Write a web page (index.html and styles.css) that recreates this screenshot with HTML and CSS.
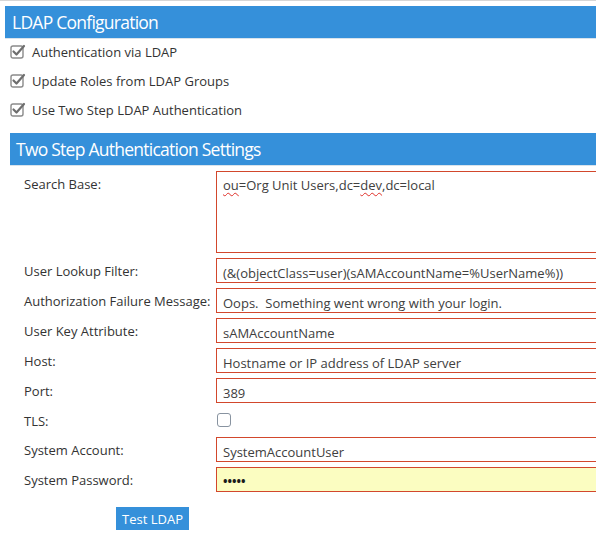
FILE: index.html
```html
<!DOCTYPE html>
<html>
<head>
<meta charset="utf-8">
<link rel="stylesheet" href="styles.css">
</head>
<body>
<div class="page">
  <section class="config">
    <h2 class="bar bar-main">LDAP Configuration</h2>
    <div class="checks">
      <label class="check-row"><span class="cb"><svg width="16" height="16" viewBox="0 0 16 16"><rect x="1" y="3" width="12" height="12" rx="2" fill="#fff" stroke="#8a8a8a" stroke-width="1.4"/><path d="M3.5 8.5 L6.5 11.5 L14 3" fill="none" stroke="#6e6e6e" stroke-width="2.2" stroke-linecap="round" stroke-linejoin="round"/></svg></span>Authentication via LDAP</label>
      <label class="check-row"><span class="cb"><svg width="16" height="16" viewBox="0 0 16 16"><rect x="1" y="3" width="12" height="12" rx="2" fill="#fff" stroke="#8a8a8a" stroke-width="1.4"/><path d="M3.5 8.5 L6.5 11.5 L14 3" fill="none" stroke="#6e6e6e" stroke-width="2.2" stroke-linecap="round" stroke-linejoin="round"/></svg></span>Update Roles from LDAP Groups</label>
      <label class="check-row"><span class="cb"><svg width="16" height="16" viewBox="0 0 16 16"><rect x="1" y="3" width="12" height="12" rx="2" fill="#fff" stroke="#8a8a8a" stroke-width="1.4"/><path d="M3.5 8.5 L6.5 11.5 L14 3" fill="none" stroke="#6e6e6e" stroke-width="2.2" stroke-linecap="round" stroke-linejoin="round"/></svg></span>Use Two Step LDAP Authentication</label>
    </div>
  </section>
  <section class="settings">
    <h2 class="bar bar-sub">Two Step Authentication Settings</h2>
    <div class="form">
      <div class="lbl">Search Base:</div>
      <div class="field area"><span class="sp">ou</span>=Org Unit Users,dc=<span class="sp">dev</span>,dc=local</div>

      <div class="lbl">User Lookup Filter:</div>
      <div class="field">(&amp;(objectClass=user)(sAMAccountName=%UserName%))</div>

      <div class="lbl">Authorization Failure Message:</div>
      <div class="field">Oops.&nbsp; Something went wrong with your login.</div>

      <div class="lbl">User Key Attribute:</div>
      <div class="field">sAMAccountName</div>

      <div class="lbl">Host:</div>
      <div class="field">Hostname or IP address of LDAP server</div>

      <div class="lbl">Port:</div>
      <div class="field">389</div>

      <div class="lbl">TLS:</div>
      <div class="tls-cell"><span class="tls-box"></span></div>

      <div class="lbl">System Account:</div>
      <div class="field">SystemAccountUser</div>

      <div class="lbl">System Password:</div>
      <div class="field pw">•••••</div>
    </div>
    <div class="actions">
      <button class="btn">Test LDAP</button>
    </div>
  </section>
</div>
</body>
</html>
```
FILE: styles.css
```css
html, body {
  margin: 0;
  padding: 0;
  background: #fff;
  overflow: hidden;
}
body {
  font-family: "Open Sans", "Noto Sans", sans-serif;
  font-size: 13px;
  color: #333;
  border-top: 1px solid #d6d6d6;
  width: 596px;
  height: 555px;
}
.page {
  padding-top: 5px;
}
.bar {
  margin: 0;
  background: #3590da;
  color: #fff;
  font-weight: normal;
  height: 32px;
  line-height: 32px;
  border-bottom: 1px solid #d8e3ec;
  white-space: nowrap;
  font-size: 17.5px;
  letter-spacing: -0.75px;
}
.bar-main {
  padding-left: 7px;
}
.config {
  margin-left: 5px;
}
.checks {
  display: flex;
  flex-direction: column;
  gap: 9px;
  padding-top: 3px;
  padding-left: 5px;
}
.check-row {
  display: flex;
  align-items: center;
  height: 20px;
  line-height: 20px;
  color: #333;
}
.cb {
  display: inline-flex;
  width: 16px;
  height: 16px;
  margin-right: 6px;
  margin-top: -2px;
}
.settings {
  margin-left: 10px;
  margin-top: 13px;
}
.bar-sub {
  padding-left: 6px;
}
.form {
  display: grid;
  grid-template-columns: 192px 420px;
  row-gap: 5px;
  padding-left: 14px;
  margin-top: 5px;
}
.lbl {
  padding-top: 4px;
  line-height: 18px;
  white-space: nowrap;
  color: #333;
}
.field {
  box-sizing: border-box;
  height: 25px;
  border: 1px solid #d2472c;
  padding: 4px 6px 0;
  line-height: 20px;
  color: #404040;
  white-space: nowrap;
  background: #fff;
}
.area {
  height: 82px;
  padding-top: 3px;
}
.sp {
  text-decoration: underline wavy #e0302a;
  text-decoration-thickness: 1px;
  text-underline-offset: 2px;
}
.pw {
  background: #fbfdc1;
  font-size: 12px;
  font-weight: bold;
  letter-spacing: 0;
  color: #1a1a1a;
  padding-top: 4px;
}
.tls-cell {
  box-sizing: border-box;
  height: 24px;
  padding-top: 5px;
}
.tls-box {
  display: block;
  box-sizing: border-box;
  width: 14px;
  height: 14px;
  margin-left: 1px;
  border: 1px solid #8893a0;
  border-radius: 3px;
  background: #fff;
}
.actions {
  padding-left: 106px;
  margin-top: 15px;
}
.btn {
  display: block;
  font-family: "Open Sans", "Noto Sans", sans-serif;
  font-size: 13px;
  background: #3590da;
  color: #fff;
  border: 0;
  border-radius: 0;
  height: 23px;
  width: 73px;
  padding: 0;
  cursor: pointer;
}
```
